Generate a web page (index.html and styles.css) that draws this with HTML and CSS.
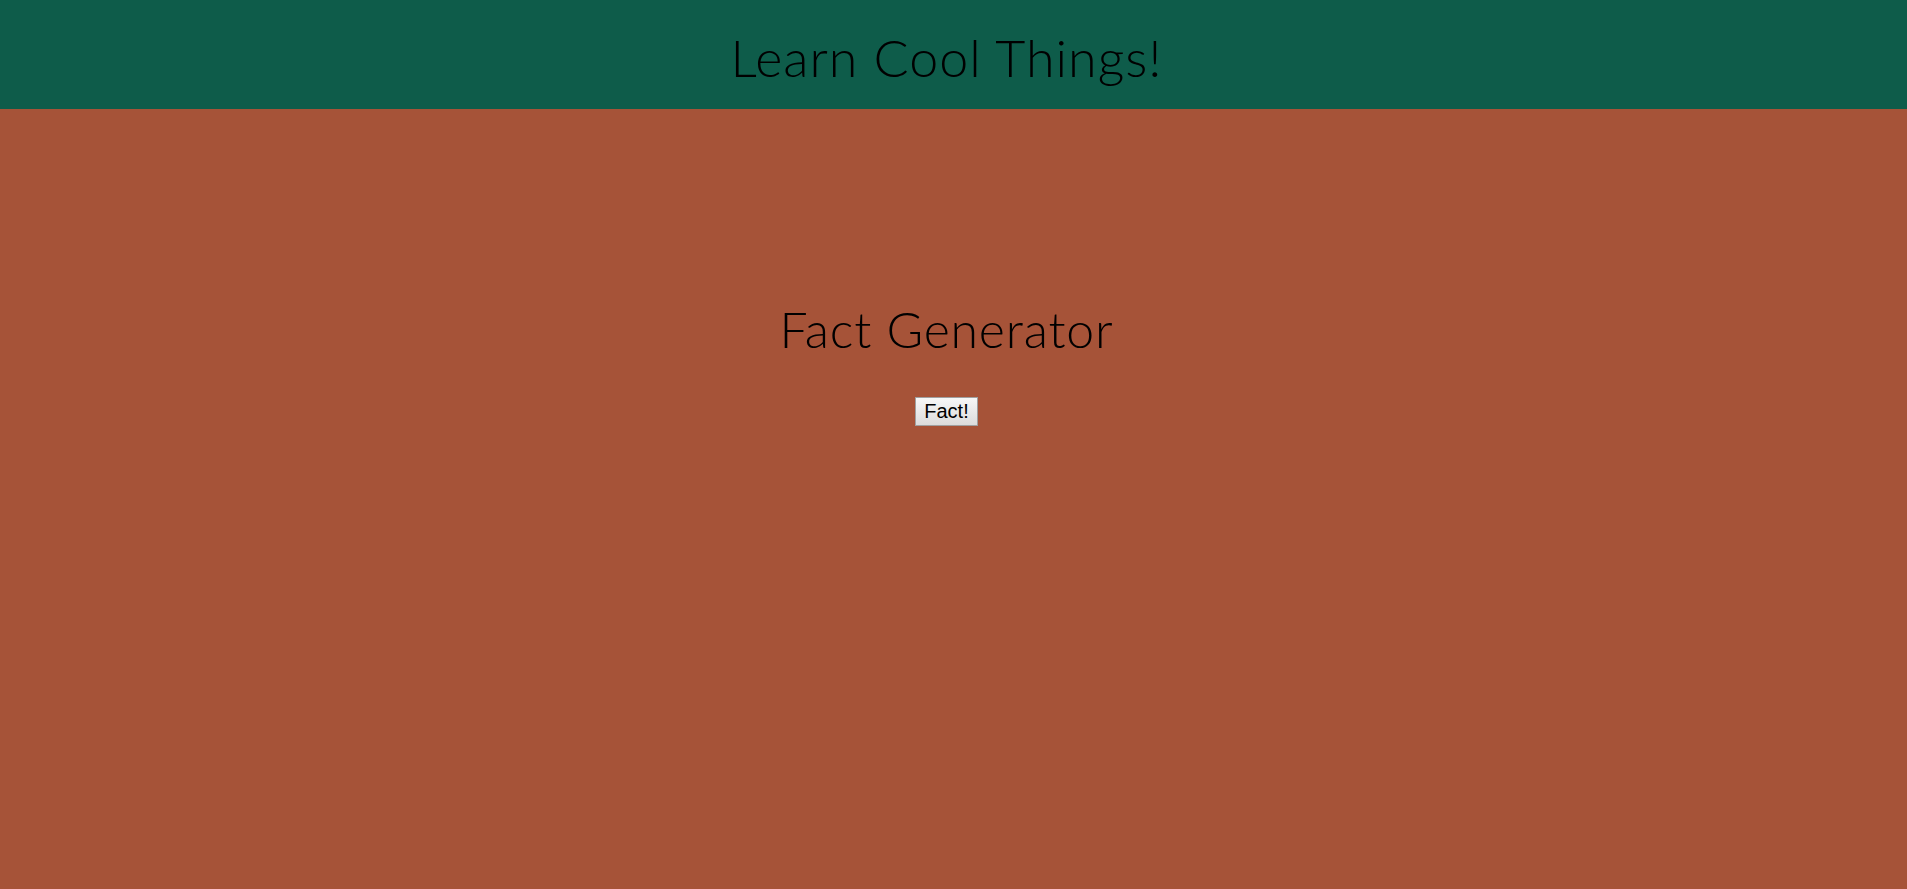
FILE: index.html
```html
<!DOCTYPE html>
<html>
<head>
<meta charset="utf-8">
<title>Learn Cool Things!</title>
<link rel="stylesheet" href="styles.css">
</head>
<body>
<header class="site-header">
  <h1 class="site-title">Learn Cool Things!</h1>
</header>
<main class="content">
  <h2 class="section-title">Fact Generator</h2>
  <button class="fact-btn" type="button">Fact!</button>
</main>
</body>
</html>
```
FILE: styles.css
```css
html, body {
  margin: 0;
  padding: 0;
  height: 100%;
}
body {
  background: #a65338;
  font-family: "Lato", "Open Sans", sans-serif;
  color: #000;
}
.site-header {
  background: #0e5c4a;
  height: 109px;
  box-sizing: border-box;
  display: flex;
  align-items: center;
  justify-content: center;
  padding-right: 14px;
  padding-top: 4px;
}
.site-title {
  margin: 0;
  font-weight: 300;
  font-size: 52px;
  letter-spacing: 1px;
}
.content {
  display: flex;
  flex-direction: column;
  align-items: center;
  padding-top: 190px;
  padding-right: 14px;
}
.section-title {
  margin: 0;
  font-weight: 300;
  font-size: 50px;
  letter-spacing: 0.8px;
  line-height: 60px;
}
.fact-btn {
  margin-top: 38px;
  font-family: "Liberation Sans", Arial, sans-serif;
  font-size: 20px;
  padding: 1px 8px;
  height: 29px;
  border: 1px solid #a0a0a0;
  border-radius: 0;
  background: linear-gradient(#f7f7f7, #dcdcdc);
  color: #000;
}
```
